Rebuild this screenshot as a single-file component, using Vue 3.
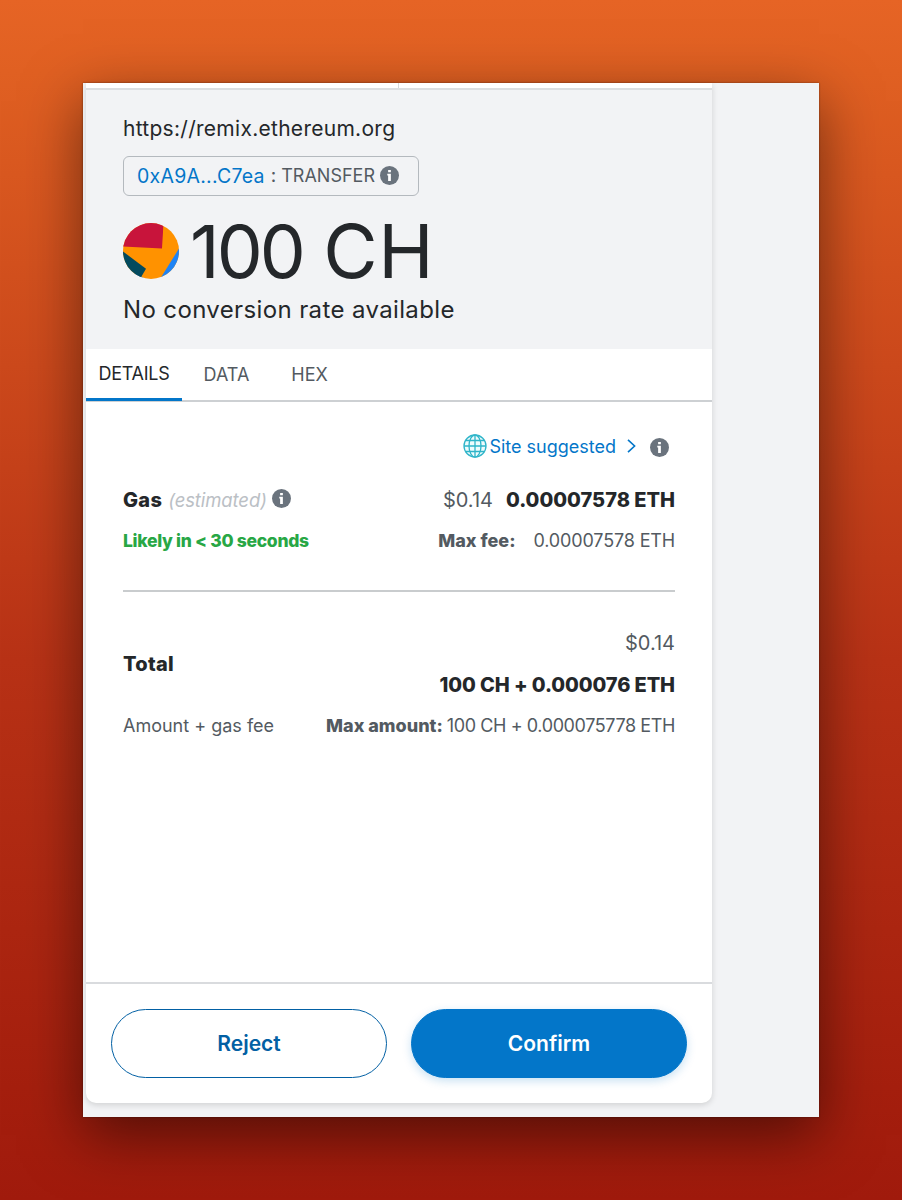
<template>
  <div class="desktop">
    <div class="window">
      <div class="card">
        <div class="network-strip">
          <div class="strip-cell"></div>
          <div class="strip-cell"></div>
        </div>

        <header class="summary">
          <div class="origin">https://remix.ethereum.org</div>
          <div class="action">
            <span class="address">0xA9A...C7ea</span>
            <span class="colon">:</span>
            <span class="method">TRANSFER</span>
            <svg class="info" viewBox="0 0 18 18">
              <circle cx="9" cy="9" r="9" />
              <path d="M7.700 3.700h2.600v2.300H7.700zM6.900 7.300h3.400v7H7.700V9.100h-0.800z" />
            </svg>
          </div>
          <div class="amount">
            <svg class="jazzicon" viewBox="0 0 56 56">
              <defs>
                <clipPath id="avatar"><circle cx="28" cy="28" r="28" /></clipPath>
              </defs>
              <g clip-path="url(#avatar)">
                <rect width="56" height="56" fill="#ff9200" />
                <path d="M0 0h40.500L39 25.600L0 23.500z" fill="#c8143b" />
                <path d="M56 25.500V56H37z" fill="#1e83f5" />
                <path d="M13 50L22 56H13z" fill="#1e83f5" />
                <path d="M0 28.500L23 45.700L17 56L0 50z" fill="#034a5e" />
              </g>
            </svg>
            <div class="amount-text">
              <span class="amount-number">100</span> <span class="amount-symbol">CH</span>
            </div>
          </div>
          <div class="conversion">No conversion rate available</div>
        </header>

        <nav class="tabs">
          <button
            v-for="tab in tabs"
            :key="tab"
            class="tab"
            :class="{ active: tab === activeTab }"
            @click="activeTab = tab"
          >{{ tab }}</button>
        </nav>

        <main class="details">
          <div class="suggested">
            <svg class="globe" viewBox="0 0 24 24">
              <circle cx="12" cy="12" r="11" />
              <ellipse cx="12" cy="12" rx="6" ry="11" />
              <path d="M12 1v22M1 12h22M3 6.500h18M3 17.500h18" />
            </svg>
            <span class="suggested-text">Site suggested</span>
            <svg class="chevron" viewBox="0 0 9 14"><path d="M1 0.800L7.600 7L1 13.200" /></svg>
            <svg class="info" viewBox="0 0 18 18">
              <circle cx="9" cy="9" r="9" />
              <path d="M7.700 3.700h2.600v2.300H7.700zM6.900 7.300h3.400v7H7.700V9.100h-0.800z" />
            </svg>
          </div>

          <div class="row gas">
            <div class="row-label">
              <span class="gas-name">Gas</span>
              <span class="estimated">(estimated)</span>
              <svg class="info" viewBox="0 0 18 18">
                <circle cx="9" cy="9" r="9" />
                <path d="M7.700 3.700h2.600v2.300H7.700zM6.900 7.300h3.400v7H7.700V9.100h-0.800z" />
              </svg>
            </div>
            <div class="row-value">
              <span class="fiat">$0.14</span>
              <span class="gas-eth">0.00007578 ETH</span>
            </div>
          </div>
          <div class="row timing">
            <span class="likely">Likely in &lt; 30 seconds</span>
            <div class="row-value">
              <span class="max-fee">Max fee:</span>
              <span class="max-fee-eth">0.00007578 ETH</span>
            </div>
          </div>

          <div class="divider"></div>

          <div class="row total">
            <span class="total-name">Total</span>
            <div class="total-values">
              <span class="fiat">$0.14</span>
              <span class="total-eth">100 CH + 0.000076 ETH</span>
            </div>
          </div>
          <div class="row max">
            <span class="hint">Amount + gas fee</span>
            <div class="row-value">
              <span class="max-amount">Max amount:</span>
              <span class="max-amount-eth">100 CH + 0.000075778 ETH</span>
            </div>
          </div>
        </main>

        <footer class="actions">
          <button class="btn reject">Reject</button>
          <button class="btn confirm">Confirm</button>
        </footer>
      </div>
    </div>
  </div>
</template>

<script setup>
import { ref } from 'vue';

const tabs = ['DETAILS', 'DATA', 'HEX'];
const activeTab = ref('DETAILS');
</script>

<style>
body {
  margin: 0;
}
</style>

<style scoped>
.desktop {
  box-sizing: border-box;
  height: 1200px;
  padding: 83px;
  overflow: hidden;
  background: linear-gradient(#e66425 0%, #e06022 6%, #b83216 55%, #a01a0c 100%);
  font-family: Inter, "Open Sans", sans-serif;
  color: #24272a;
  white-space: nowrap;
}
.window {
  box-sizing: border-box;
  height: 1034px;
  padding: 0 0 14px 3px;
  background: #f2f3f5;
  box-shadow: 0 18px 55px rgba(0, 0, 0, 0.5), 0 0 2px rgba(0, 0, 0, 0.4);
}
.card {
  display: flex;
  flex-direction: column;
  width: 626px;
  height: 1020px;
  background: #fff;
  border-radius: 0 0 10px 10px;
  box-shadow: 0 2px 6px rgba(0, 0, 0, 0.14);
}
.network-strip {
  display: flex;
  height: 5px;
  border-bottom: 2px solid #dcdee0;
}
.strip-cell {
  width: 312px;
  border-right: 1px solid #d6d9dc;
}
.strip-cell:last-child {
  border-right: none;
}
.summary {
  box-sizing: border-box;
  height: 259px;
  padding: 23px 37px 0;
  background: #f2f3f5;
}
.origin {
  height: 32px;
  font-size: 21px;
  line-height: 32px;
  letter-spacing: 0.28px;
}
.action {
  display: flex;
  align-items: center;
  box-sizing: border-box;
  width: 296px;
  height: 40px;
  margin-top: 11px;
  padding: 0 12px 1px 13px;
  border: 1px solid #b4b9be;
  border-radius: 6px;
}
.address {
  font-size: 19.500px;
  letter-spacing: 0.25px;
  color: #0376c9;
}
.colon {
  margin: 0 5px 0 6px;
  font-size: 19px;
  color: #535a61;
}
.method {
  margin-right: 5px;
  font-size: 18px;
  color: #535a61;
}
.info {
  width: 19px;
  height: 19px;
  flex: none;
}
.info circle {
  fill: #6a737d;
}
.info path {
  fill: #fff;
}
.amount {
  display: flex;
  align-items: center;
  height: 84px;
  margin-top: 13px;
}
.jazzicon {
  width: 56px;
  height: 56px;
}
.amount-text {
  margin-left: 11px;
  font-size: 73px;
  line-height: 85px;
}
.amount-number {
  letter-spacing: -3px;
}
.amount-symbol {
  font-size: 74.500px;
  letter-spacing: 0.5px;
}
.conversion {
  height: 34px;
  font-size: 24px;
  line-height: 34px;
  letter-spacing: 0.37px;
}
.tabs {
  display: flex;
  box-sizing: border-box;
  height: 53px;
  border-bottom: 2px solid #cdd0d3;
}
.tab {
  box-sizing: border-box;
  height: 52px;
  padding: 0 12px 2px;
  background: none;
  border: none;
  font-family: inherit;
  font-size: 18px;
  color: #535a61;
  cursor: pointer;
}
.tab:nth-child(1) {
  width: 96px;
  letter-spacing: -0.3px;
}
.tab:nth-child(2) {
  width: 89px;
}
.tab:nth-child(3) {
  width: 77px;
}
.tab.active {
  padding-bottom: 0;
  border-bottom: 3px solid #0376c9;
  color: #24272a;
}
.details {
  flex: 1;
  padding: 0 37px;
}
.suggested {
  display: flex;
  align-items: center;
  justify-content: flex-end;
  height: 28px;
  margin-top: 30px;
  padding-right: 6px;
  font-size: 18px;
  color: #0376c9;
}
.suggested .info {
  margin-top: 2px;
}
.globe {
  width: 24px;
  height: 24px;
  margin-right: 2px;
  fill: #effcfd;
  stroke: #2fb5c9;
  stroke-width: 1.3;
}
.chevron {
  width: 9px;
  height: 14px;
  margin: 0 14px 0 11px;
  fill: none;
  stroke: #0376c9;
  stroke-width: 1.6;
}
.row {
  display: flex;
  align-items: center;
  justify-content: space-between;
}
.row-label,
.row-value {
  display: flex;
  align-items: center;
}
.gas {
  height: 30px;
  margin-top: 25px;
  font-size: 20px;
}
.gas .info {
  margin-bottom: 3px;
}
.gas-name,
.gas-eth,
.total-name,
.total-eth {
  font-weight: 800;
}
.gas-name,
.total-name {
  letter-spacing: 0.3px;
}
.estimated {
  margin: 0 5px 0 6px;
  font-size: 18.500px;
  font-style: italic;
  letter-spacing: -0.1px;
  color: #bbc0c5;
}
.fiat {
  font-size: 20px;
  color: #535a61;
}
.gas-eth {
  margin-left: 13px;
}
.timing {
  height: 28px;
  margin-top: 11px;
  font-size: 18px;
  color: #535a61;
}
.likely {
  font-size: 17.500px;
  font-weight: 800;
  letter-spacing: -0.3px;
  color: #28a745;
}
.max-fee,
.max-amount {
  font-weight: 800;
}
.max-fee-eth {
  margin-left: 18px;
  letter-spacing: -0.15px;
}
.divider {
  height: 2px;
  margin-top: 36px;
  background: #c9ccce;
}
.total {
  height: 84px;
  margin-top: 30px;
  font-size: 20px;
}
.total-values {
  display: flex;
  flex-direction: column;
  align-items: flex-end;
  line-height: 42px;
}
.total-eth {
  letter-spacing: -0.1px;
}
.max {
  height: 28px;
  margin-top: 5px;
  font-size: 18px;
  color: #535a61;
}
.max-amount-eth {
  margin-left: 4px;
  letter-spacing: -0.4px;
}
.actions {
  display: flex;
  gap: 24px;
  box-sizing: border-box;
  height: 121px;
  padding: 25px 25px 0;
  border-top: 2px solid #d9dbde;
}
.btn {
  box-sizing: border-box;
  flex: 1;
  height: 69px;
  padding-bottom: 1px;
  border: 1.500px solid #0260a4;
  border-radius: 35px;
  background: #fff;
  font-family: inherit;
  font-size: 21px;
  font-weight: 600;
  color: #0260a4;
  cursor: pointer;
}
.confirm {
  border-color: #0376c9;
  background: #0376c9;
  color: #fff;
  box-shadow: 0 3px 10px rgba(3, 118, 201, 0.22);
}
</style>
